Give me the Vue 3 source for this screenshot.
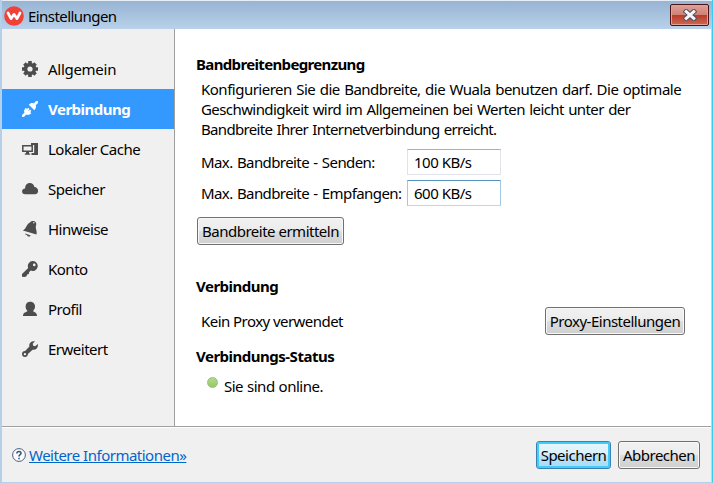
<script setup>
import { ref } from 'vue'

const items = [
  { id: 'general', label: 'Allgemein' },
  { id: 'connection', label: 'Verbindung' },
  { id: 'cache', label: 'Lokaler Cache' },
  { id: 'storage', label: 'Speicher' },
  { id: 'notices', label: 'Hinweise' },
  { id: 'account', label: 'Konto' },
  { id: 'profile', label: 'Profil' },
  { id: 'advanced', label: 'Erweitert' }
]
const active = ref('connection')
const upload = ref('100 KB/s')
const download = ref('600 KB/s')
</script>

<template>
  <div class="window">
    <header class="titlebar">
      <svg class="logo" width="20" height="20" viewBox="0 0 20 20">
        <circle cx="10" cy="10" r="9.8" fill="#f04037" />
        <path d="M4 7 7 12.7 10 8.3 13 12.7 16 7" fill="none" stroke="#fff" stroke-width="2.7" stroke-linejoin="round" stroke-linecap="round" />
      </svg>
      <span class="title">Einstellungen</span>
      <button class="close" aria-label="Schließen">
        <svg width="14" height="12" viewBox="0 0 14 12">
          <path d="M3.2 2.6 10.8 9.4M10.8 2.6 3.2 9.4" stroke="#4a4f63" stroke-width="5" stroke-linecap="square" />
          <path d="M3.2 2.6 10.8 9.4M10.8 2.6 3.2 9.4" stroke="#f6f6f8" stroke-width="3" stroke-linecap="square" />
        </svg>
      </button>
    </header>

    <div class="body">
      <nav class="sidebar">
        <a v-for="item in items" :key="item.id" class="item" :class="[item.id, { active: item.id === active }]" @click="active = item.id">
          <svg class="icon" width="16" height="16" viewBox="0 0 16 16" fill="currentColor">
            <g v-if="item.id === 'general'">
              <path d="M8 0V16M0 8H16M2.4 2.4 13.6 13.6M13.6 2.4 2.4 13.6" stroke="currentColor" stroke-width="3.6" />
              <circle cx="8" cy="8" r="6.2" />
              <circle cx="8" cy="8" r="2.6" fill="#f0f0f0" />
            </g>
            <g v-else-if="item.id === 'connection'">
              <path d="M16 0 15.8 2.2 13.7 4.3C14.4 6.2 13.8 7.7 12.3 9.2L6.8 3.7C8.3 2.2 10 1.7 11.8 2.4L13.8.2Z" />
              <path d="M0 16 .2 13.8 2.4 11.7C1.7 9.8 2.3 8.2 3.8 6.7L5 7.9 6.2 6.7 7.5 8 6.3 9.2 6.9 9.8 8.1 8.6 9.4 9.9 8.2 11.1 9.3 12.2C7.8 13.7 6 14.3 4.2 13.6L2.2 15.8Z" />
            </g>
            <g v-else-if="item.id === 'cache'">
              <path d="M9 2H16V14H9.5V12H12.2V4H9Z" />
              <path d="M.8 4.8H10.2V10.2H.8Z" fill="none" stroke="currentColor" stroke-width="1.5" />
              <path d="M4 10.5H7V12.5H8.2V13.7H2.8V12.5H4Z" />
            </g>
            <path v-else-if="item.id === 'storage'" d="M3.2 13.2C-1 13.2-.9 7.6 3.1 7.6 3 .8 11.4.3 12.4 6 17 6 17.4 13.2 13 13.2Z" />
            <g v-else-if="item.id === 'notices'">
              <path d="M.8 9.6C4.6 7.8 4 3.3 8 1.5 8.8-.1 11-.4 12.4.3 14.1 1.2 14.6 2.5 14.1 4.1 13 7.2 15.3 9.6 14.5 13.6Z" />
              <path d="M3.4 12.4 8.7 14.4C7.6 16.2 5.4 15.8 5 13.9L3.3 13.4Z" />
              <circle cx="11.8" cy="1.8" r=".7" fill="#f0f0f0" />
            </g>
            <path v-else-if="item.id === 'account'" fill-rule="evenodd" d="M11 0A5 5 0 1 1 8.8 9.6L7.2 11.1 6.8 13.1 5.1 13.4 4.6 15.2 2.4 16 0 15.7V13L6.2 6.9A5 5 0 0 1 11 0ZM12.2 2.6A1.3 1.3 0 1 0 12.3 5.2A1.3 1.3 0 0 0 12.2 2.6Z" />
            <path v-else-if="item.id === 'profile'" d="M8.2.8C11.4.8 13.1 3 13 5.6 13 7.6 12.2 9 11 10.1 12 11.4 15 11.4 15 15H1C1 11.4 4.5 11.4 5.5 10.1 4.3 9 3.6 7.5 3.6 5.6 3.6 2.8 5.4.8 8.2.8Z" />
            <path v-else fill-rule="evenodd" d="M13 .3 10.7 2.8 11.2 4.8 13.2 5.3 15.8 3C16.6 6.6 14 9.4 10.6 8.7L5.9 13C5.9 14.7 4.7 16 3 16A3 3 0 0 1 0 13.1C0 11.2 1.4 10 3.1 10.1L7.4 5.6C6.5 2.2 9.4-.6 13 .3ZM2.9 11.9A1.2 1.2 0 1 0 3 14.3A1.2 1.2 0 0 0 2.9 11.9Z" />
          </svg>
          <span class="label">{{ item.label }}</span>
        </a>
      </nav>

      <main class="content">
        <h2 class="h-limit">Bandbreitenbegrenzung</h2>
        <p class="intro">
          <span class="l1">Konfigurieren Sie die Bandbreite, die Wuala benutzen darf. Die optimale</span><br />
          <span class="l2">Geschwindigkeit wird im Allgemeinen bei Werten leicht unter der</span><br />
          <span class="l3">Bandbreite Ihrer Internetverbindung erreicht.</span>
        </p>
        <div class="fields">
          <label for="up">Max. Bandbreite - Senden:</label>
          <input id="up" v-model="upload" />
          <label for="down">Max. Bandbreite - Empfangen:</label>
          <input id="down" v-model="download" class="hot" />
        </div>
        <button class="btn detect"><span>Bandbreite ermitteln</span></button>

        <h2 class="h-conn">Verbindung</h2>
        <div class="proxy">
          <span class="t-proxy">Kein Proxy verwendet</span>
          <button class="btn proxybtn"><span>Proxy-Einstellungen</span></button>
        </div>
        <h2 class="h-status">Verbindungs-Status</h2>
        <div class="status"><i class="dot"></i><span class="t-online">Sie sind online.</span></div>
      </main>
    </div>

    <footer class="footer">
      <svg class="help" width="14" height="14" viewBox="0 0 14 14" fill="none">
        <circle cx="7" cy="7" r="6.4" fill="#fafcff" stroke="#4c5f7d" />
        <path d="M4.9 5.4C4.9 2.8 9.2 2.9 9 5.3 8.9 6.8 7 6.7 7 8.6M7 9.8V11.3" stroke="#3c5275" stroke-width="1.6" />
      </svg>
      <a class="link">Weitere Informationen»</a>
      <button class="btn save"><span>Speichern</span></button>
      <button class="btn cancel"><span>Abbrechen</span></button>
    </footer>
  </div>
</template>

<style>
body {
  background: #b9d1ea;
}
</style>

<style scoped>
* {
  box-sizing: border-box;
}
.window {
  width: 713px;
  height: 483px;
  display: flex;
  flex-direction: column;
  padding-right: 1px;
  background: #b9d8ee;
  border-left: 2px solid #b5d0e8;
  border-right: 1px solid #35cdf3;
  border-bottom: 1px solid #b5d0e8;
  font: 15px/20px "Noto Sans", "Open Sans", sans-serif;
  letter-spacing: -0.5px;
  color: #000;
  white-space: nowrap;
  overflow: hidden;
}
.titlebar {
  height: 29px;
  flex: none;
  display: flex;
  align-items: center;
  margin: 0 -1px 0 -2px;
  padding: 1px 3px 0 4px;
  border-top: 1px solid #e6edf5;
  background: linear-gradient(#97b4d3, #b9d1ea);
}
.title {
  margin-left: 4px;
  letter-spacing: -0.56px;
}
.close {
  width: 39px;
  height: 22px;
  margin: 0 0 1px auto;
  padding: 0;
  display: flex;
  align-items: center;
  justify-content: center;
  border: 1px solid #47141a;
  border-radius: 2px;
  box-shadow: inset 0 0 0 1px #e0a197;
  background: linear-gradient(#dea198 0, #d08272 48%, #b93a26 49%, #ce6755 100%);
}
.body {
  flex: 1;
  display: flex;
  min-height: 0;
}
.sidebar {
  width: 173px;
  flex: none;
  padding-top: 20px;
  background: #f0f0f0;
  border-right: 1px solid #a0a0a0;
}
.item {
  height: 40px;
  display: flex;
  align-items: center;
  padding-left: 20px;
  gap: 10px;
}
.general {
  letter-spacing: -0.28px;
}
.icon {
  color: #4d4d4d;
  flex: none;
}
.active {
  background: #3399ff;
  color: #fff;
  font-weight: 700;
}
.active .icon {
  color: #fff;
}
.content {
  flex: 1;
  background: #fff;
  padding: 25px 26px 0 21px;
}
h2 {
  margin: 0;
  font-size: 15px;
  line-height: 20px;
}
.h-limit {
  letter-spacing: -0.65px;
}
.intro {
  margin: 5px 0 0 5px;
}
.l1 {
  word-spacing: 1px;
}
.l2 {
  word-spacing: 1px;
  letter-spacing: -0.58px;
}
.l3 {
  word-spacing: 1px;
  letter-spacing: -0.67px;
}
.fields {
  margin: 10px 0 0 5px;
  display: grid;
  grid-template-columns: 206px 94px;
  grid-auto-rows: 26px;
  row-gap: 5px;
  align-items: center;
}
.fields label {
  word-spacing: 1px;
  letter-spacing: -0.59px;
}
input {
  width: 94px;
  height: 26px;
  border: 1px solid #e2e3ea;
  border-top-color: #abadb3;
  padding: 0 6px;
  font: inherit;
  letter-spacing: inherit;
  outline: none;
}
input.hot {
  border-color: #5794bf #a3c9e2 #b7d9ed #a3c9e2;
}
.btn {
  height: 28px;
  padding: 0;
  display: flex;
  align-items: center;
  justify-content: center;
  border: 1px solid #707070;
  border-radius: 3px;
  background: linear-gradient(#f2f2f2 0, #ebebeb 49%, #dddddd 50%, #cfcfcf 100%);
  box-shadow: inset 0 0 0 1px #f8f8f8;
  font: inherit;
  letter-spacing: inherit;
}
.detect {
  width: 147px;
  margin: 11px 0 0 1px;
}
.h-conn {
  margin-top: 31px;
}
.proxy {
  margin: 11px 0 0 5px;
  display: flex;
  align-items: center;
  justify-content: space-between;
}
.proxybtn {
  width: 140px;
}
.t-proxy {
  letter-spacing: -0.55px;
}
.h-status {
  margin-top: 11px;
}
.status {
  display: flex;
  margin: 10px 0 0 11px;
}
.t-online {
  word-spacing: 0.6px;
}
.dot {
  width: 11px;
  height: 11px;
  margin: 1px 6px 0 0;
  border-radius: 50%;
  border: 1px solid #9dbb85;
  background: linear-gradient(#b2da8c, #93cc62);
}
.footer {
  height: 56px;
  flex: none;
  display: flex;
  align-items: center;
  padding: 1px 11px 0 10px;
  background: #f0f0f0;
  border-top: 1px solid #a0a0a0;
  box-shadow: inset 0 1px #fff;
}
.link {
  margin-left: 3px;
  color: #0066cc;
  text-decoration: underline;
}
.save {
  width: 75px;
  margin-left: auto;
  border-color: #3c7fb1;
  background: linear-gradient(#eaf6fd 0, #d9f0fc 49%, #bee6fd 50%, #a7d9f5 100%);
  box-shadow: inset 0 0 0 2px #41cdf7;
}
.cancel {
  width: 82px;
  margin-left: 7px;
}
</style>
